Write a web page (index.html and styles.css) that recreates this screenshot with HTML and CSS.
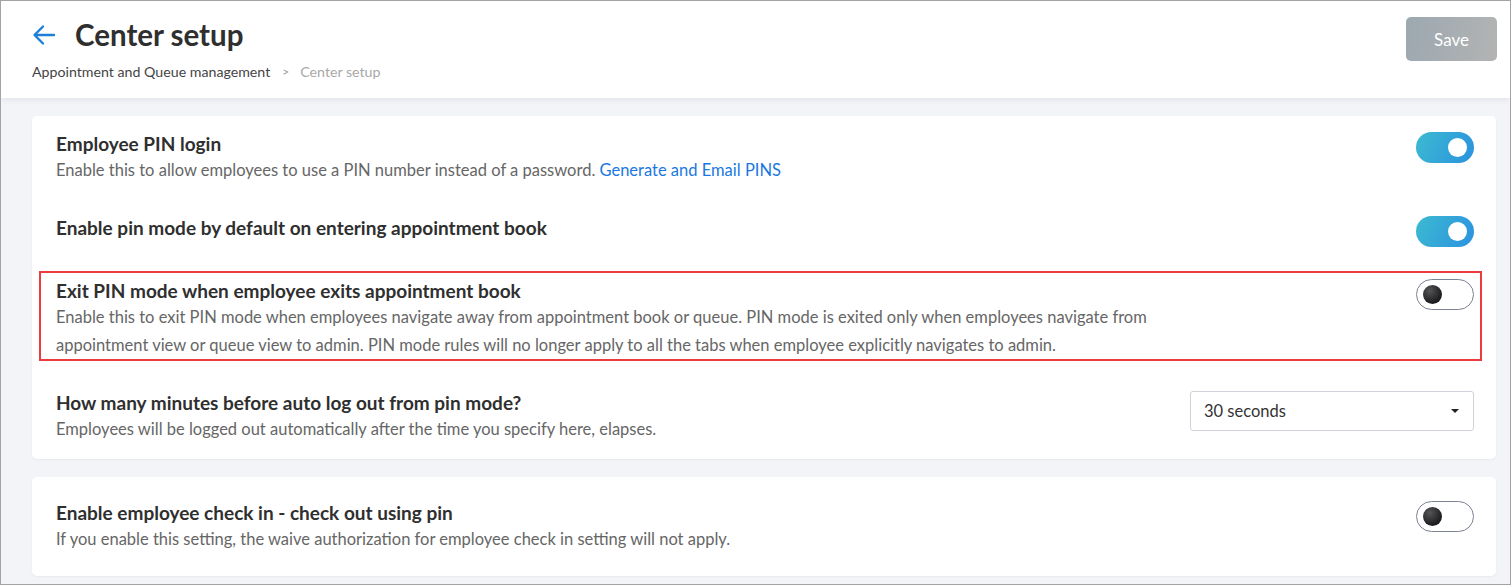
FILE: index.html
```html
<!DOCTYPE html>
<html lang="en">
<head>
<meta charset="utf-8">
<title>Center setup</title>
<link rel="stylesheet" href="styles.css">
</head>
<body>
<div class="frame">
  <header class="header">
    <div class="header-left">
      <div class="title-row">
        <svg class="back" width="24" height="22" viewBox="0 0 24 22" aria-hidden="true">
          <path d="M22 11H3 M11 2.5L2.5 11 11 19.5" fill="none" stroke="#1f7fd8" stroke-width="2.4" stroke-linecap="round" stroke-linejoin="round"/>
        </svg>
        <h1 class="title">Center setup</h1>
      </div>
      <nav class="crumbs">
        <span class="crumb">Appointment and Queue management</span>
        <span class="sep">&gt;</span>
        <span class="crumb current">Center setup</span>
      </nav>
    </div>
    <button class="save">Save</button>
  </header>

  <main class="content">
    <section class="card">
      <div class="row">
        <div class="text">
          <div class="label">Employee PIN login</div>
          <div class="desc">Enable this to allow employees to use a PIN number instead of a password. <a class="link" href="#">Generate and Email PINS</a></div>
        </div>
        <span class="toggle on"><span class="knob"></span></span>
      </div>
      <div class="row">
        <div class="text">
          <div class="label">Enable pin mode by default on entering appointment book</div>
        </div>
        <span class="toggle on"><span class="knob"></span></span>
      </div>
      <div class="row highlighted">
        <div class="text">
          <div class="label">Exit PIN mode when employee exits appointment book</div>
          <div class="desc wrap">Enable this to exit PIN mode when employees navigate away from appointment book or queue. PIN mode is exited only when employees navigate from appointment view or queue view to admin. PIN mode rules will no longer apply to all the tabs when employee explicitly navigates to admin.</div>
        </div>
        <span class="toggle off"><span class="knob"></span></span>
        <span class="mark"></span>
      </div>
      <div class="row">
        <div class="text">
          <div class="label">How many minutes before auto log out from pin mode?</div>
          <div class="desc">Employees will be logged out automatically after the time you specify here, elapses.</div>
        </div>
        <div class="select">
          <span>30 seconds</span>
          <span class="caret"></span>
        </div>
      </div>
    </section>

    <section class="card card-2">
      <div class="row">
        <div class="text">
          <div class="label">Enable employee check in - check out using pin</div>
          <div class="desc">If you enable this setting, the waive authorization for employee check in setting will not apply.</div>
        </div>
        <span class="toggle off"><span class="knob"></span></span>
      </div>
    </section>
  </main>
</div>
</body>
</html>
```

FILE: styles.css
```css
* { box-sizing: border-box; }

html, body {
  margin: 0;
  padding: 0;
  background: #ffffff;
}

body {
  font-family: "Lato", "Open Sans", "Liberation Sans", sans-serif;
  color: #333333;
}

.frame {
  width: 1511px;
  height: 585px;
  border: 1px solid #a3a3a3;
  background: #f3f4f8;
  overflow: hidden;
  display: flex;
  flex-direction: column;
}

.header {
  background: #ffffff;
  height: 97px;
  flex: none;
  display: flex;
  justify-content: space-between;
  align-items: flex-start;
  padding: 16px 12px 0 31px;
  box-shadow: 0 1px 6px rgba(120, 125, 150, 0.18);
  position: relative;
  z-index: 1;
}

.title-row {
  display: flex;
  align-items: center;
  gap: 19px;
  height: 36px;
}

.back { display: block; margin-top: -1px; }

.title {
  margin: 0;
  font-size: 29.5px;
  font-weight: 700;
  color: #2f2f2f;
  line-height: 36px;
}

.crumbs {
  margin-top: 10px;
  font-size: 14.2px;
  line-height: 18px;
  color: #444444;
  display: flex;
}

.sep {
  color: #9a9a9a;
  margin: 0 11px 0 12px;
  font-size: 12px;
}

.crumb.current { color: #a8a8a8; }

.save {
  width: 91px;
  height: 44px;
  border: none;
  border-radius: 5px;
  background: linear-gradient(100deg, #9ca8b0 0%, #b3b3b3 100%);
  color: #ffffff;
  font-family: inherit;
  font-size: 17px;
  padding: 0;
  margin-right: 1px;
}

.content {
  padding: 18px 14px 0 31px;
  display: flex;
  flex-direction: column;
  gap: 18px;
}

.card {
  background: #ffffff;
  border-radius: 5px;
  box-shadow: 0 1px 2px rgba(0, 0, 0, 0.05);
  padding: 16px 22px 16px 24px;
  display: flex;
  flex-direction: column;
  gap: 32px;
}

.card-2 { padding: 24px 22px 23px 24px; }

.row {
  display: flex;
  justify-content: space-between;
  align-items: flex-start;
  position: relative;
}

.label {
  font-size: 19px;
  font-weight: 700;
  line-height: 24px;
  color: #2f2f2f;
}

.desc {
  font-size: 16.5px;
  line-height: 28px;
  color: #666666;
}

.desc.wrap { max-width: 1120px; }

.link {
  color: #1a78e0;
  text-decoration: none;
}

.toggle {
  flex: none;
  width: 58px;
  height: 31px;
  border-radius: 16px;
  display: flex;
  align-items: center;
  position: relative;
}

.toggle.on {
  background: linear-gradient(115deg, #3cbad0 0%, #2b92e0 100%);
  justify-content: flex-end;
  padding-right: 7px;
}

.toggle.on .knob {
  width: 19px;
  height: 19px;
  border-radius: 50%;
  background: #ffffff;
}

.toggle.off {
  background: #ffffff;
  border: 1px solid #7d8292;
  padding-left: 6px;
}

.toggle.off .knob {
  width: 19px;
  height: 19px;
  border-radius: 50%;
  background: radial-gradient(circle at 35% 30%, #555558 0%, #1c1c1e 70%);
}

.mark {
  position: absolute;
  top: -8px;
  left: -17px;
  right: -8px;
  bottom: -2px;
  border: 2px solid #ec3b40;
  pointer-events: none;
}

.select {
  flex: none;
  width: 284px;
  height: 40px;
  border: 1px solid #cfd2d8;
  border-radius: 3px;
  display: flex;
  align-items: center;
  justify-content: space-between;
  padding: 0 14px 0 13px;
  font-size: 16.5px;
  color: #333333;
}

.caret {
  width: 0;
  height: 0;
  border-left: 4px solid transparent;
  border-right: 4px solid transparent;
  border-top: 4px solid #222222;
}
```
